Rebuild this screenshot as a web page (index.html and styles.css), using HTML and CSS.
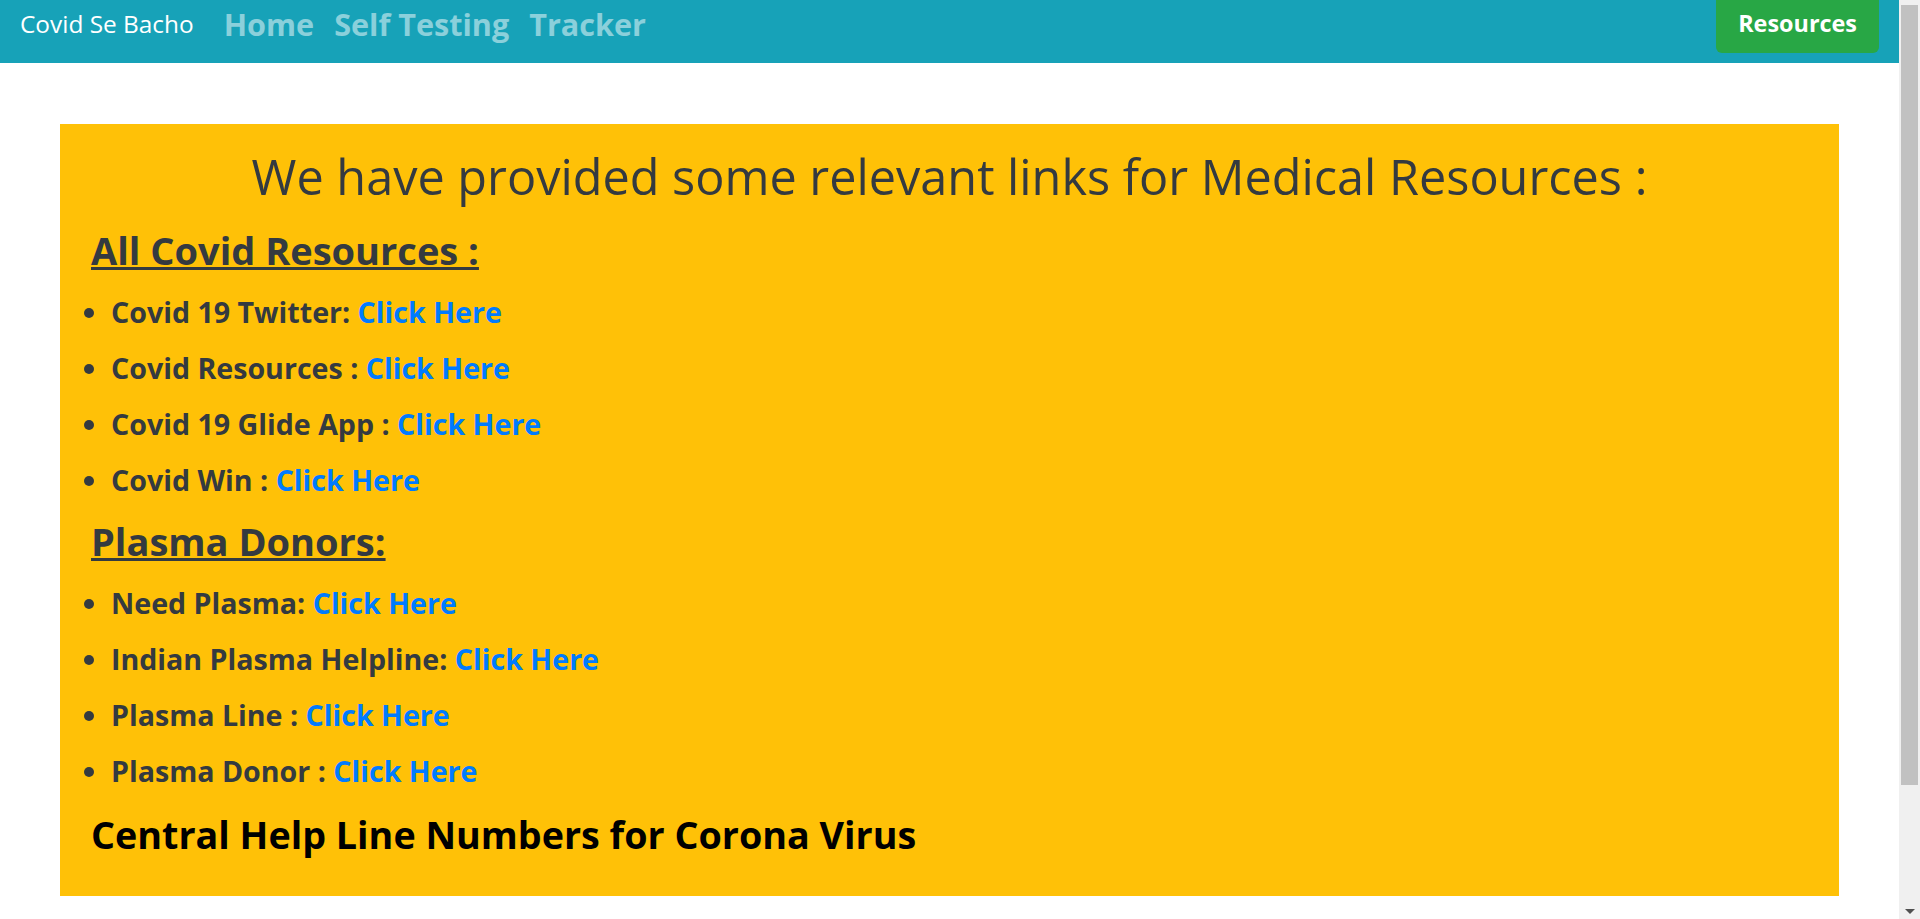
FILE: index.html
```html
<!DOCTYPE html>
<html lang="en">
<head>
<meta charset="utf-8">
<title>Covid Se Bacho - Resources</title>
<link rel="stylesheet" href="styles.css">
</head>
<body>
<nav class="navbar">
  <a class="brand" href="#">Covid Se Bacho</a>
  <ul class="nav-links">
    <li><a href="#">Home</a></li>
    <li><a href="#">Self Testing</a></li>
    <li><a href="#">Tracker</a></li>
  </ul>
  <a class="btn-resources" href="#">Resources</a>
</nav>
<main class="page">
  <section class="resources-box">
    <h1 class="title">We have provided some relevant links for Medical Resources :</h1>
    <h2 class="section-head">All Covid Resources :</h2>
    <ul class="link-list">
      <li>Covid 19 Twitter: <a href="#">Click Here</a></li>
      <li>Covid Resources : <a href="#">Click Here</a></li>
      <li>Covid 19 Glide App : <a href="#">Click Here</a></li>
      <li>Covid Win : <a href="#">Click Here</a></li>
    </ul>
    <h2 class="section-head">Plasma Donors:</h2>
    <ul class="link-list">
      <li>Need Plasma: <a href="#">Click Here</a></li>
      <li>Indian Plasma Helpline: <a href="#">Click Here</a></li>
      <li>Plasma Line : <a href="#">Click Here</a></li>
      <li>Plasma Donor : <a href="#">Click Here</a></li>
    </ul>
    <h2 class="helpline">Central Help Line Numbers for Corona Virus</h2>
  </section>
</main>
<div class="scrollbar" aria-hidden="true">
  <div class="scroll-thumb"></div>
  <div class="scroll-arrow"></div>
</div>
</body>
</html>
```
FILE: styles.css
```css
html, body {
  margin: 0;
  padding: 0;
  background: #fff;
}
body {
  padding-right: 21px;
  font-family: "Open Sans", "Noto Sans", sans-serif;
  color: #343a40;
}
.navbar {
  display: flex;
  align-items: center;
  height: 47px;
  padding: 0 20px 16px 20px;
  background: #17a2b8;
}
.brand {
  color: #fff;
  font-size: 24.4px;
  line-height: 38px;
  text-decoration: none;
  margin-right: 20px;
}
.nav-links {
  display: flex;
  list-style: none;
  margin: 0;
  padding: 0;
}
.nav-links a {
  display: block;
  padding: 0 10px;
  font-size: 30.6px;
  font-weight: 700;
  line-height: 40px;
  color: rgba(255,255,255,0.5);
  text-decoration: none;
}
.btn-resources {
  margin-left: auto;
  background: #28a745;
  color: #fff;
  font-size: 23.4px;
  font-weight: 700;
  line-height: 38px;
  padding: 10px 22px 11px 22px;
  border-radius: 6px;
  text-decoration: none;
}
.page {
  padding: 61px 0 154px 60px;
}
.resources-box {
  width: 1779px;
  box-sizing: border-box;
  background: #ffc107;
  padding: 22px 0 37px 0;
}
.title {
  margin: 0 0 20px 0;
  text-align: center;
  font-size: 48.6px;
  font-weight: 400;
  line-height: 60px;
}
.section-head, .helpline {
  margin: 0 0 15px 0;
  padding-left: 31px;
  font-size: 38px;
  font-weight: 700;
  line-height: 48px;
}
.section-head {
  text-decoration: underline;
}
.helpline {
  margin: 17px 0 0 0;
  font-size: 37.7px;
  color: #000;
}
.link-list {
  margin: 0 0 14px 0;
  padding-left: 51px;
}
.link-list li {
  font-size: 28.6px;
  font-weight: 700;
  line-height: 46px;
  margin-bottom: 10px;
}
.link-list a {
  color: #007bff;
  text-decoration: none;
}
.scrollbar {
  position: fixed;
  top: 0;
  right: 0;
  width: 21px;
  height: 100%;
  display: flex;
  flex-direction: column;
  align-items: center;
  background: #f0f0f0;
}
.scroll-thumb {
  margin-top: 5px;
  width: 17px;
  height: 780px;
  background: #c1c1c1;
}
.scroll-arrow {
  margin-top: auto;
  margin-bottom: 5px;
  width: 0;
  height: 0;
  border-left: 5px solid transparent;
  border-right: 5px solid transparent;
  border-top: 5px solid #505050;
}
```
